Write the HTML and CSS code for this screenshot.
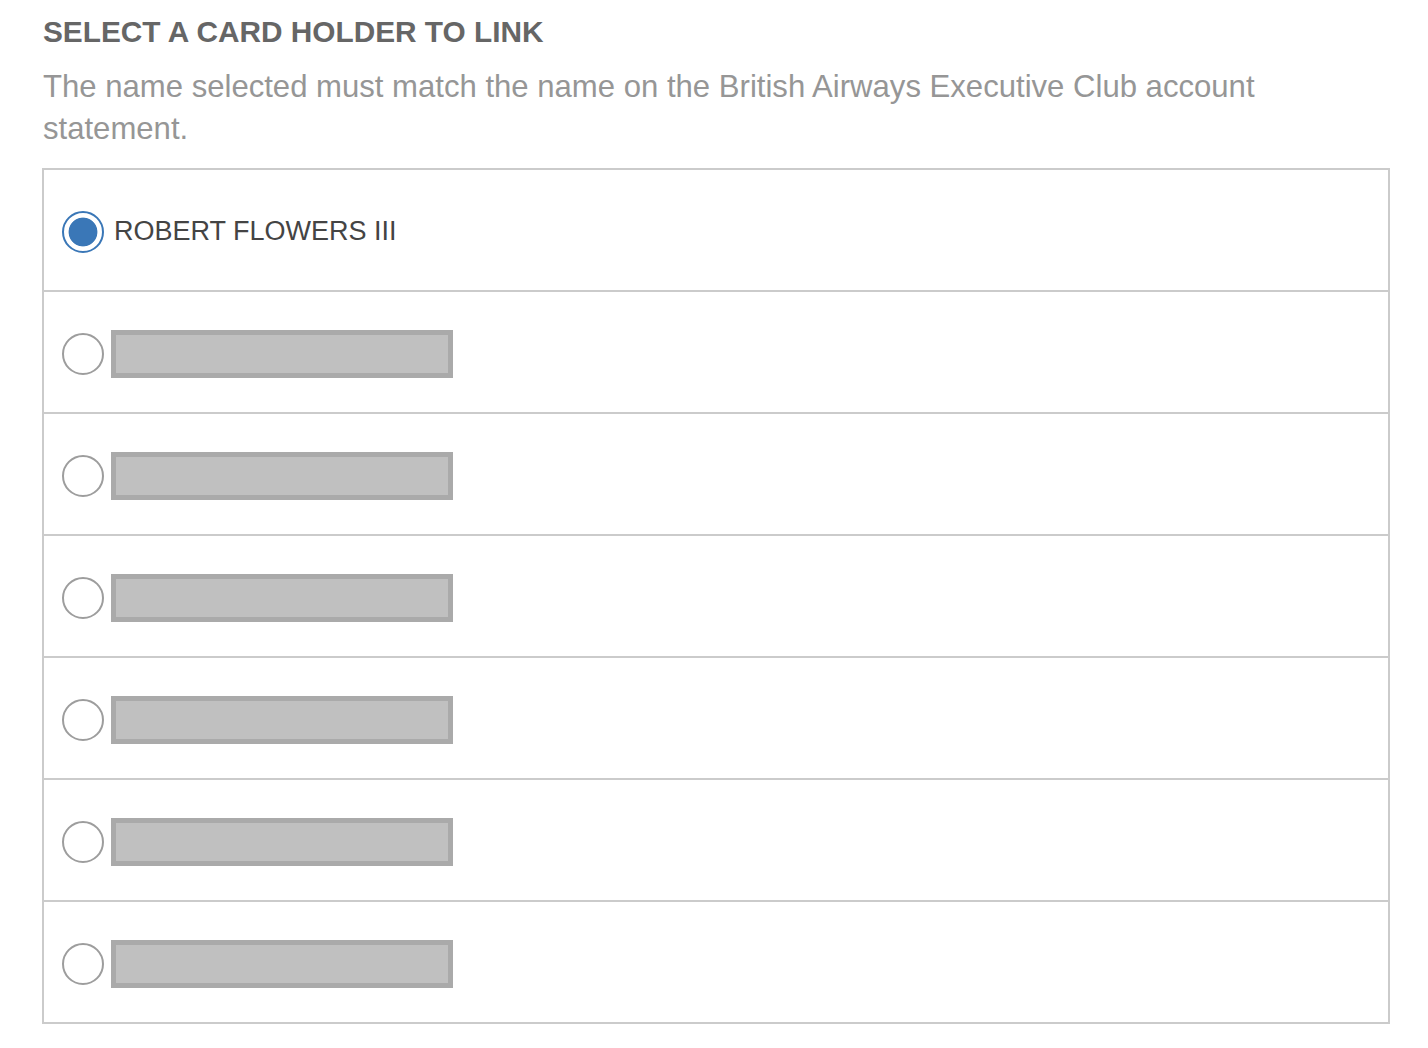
FILE: index.html
```html
<!DOCTYPE html>
<html lang="en">
<head>
  <meta charset="UTF-8">
  <meta name="viewport" content="width=device-width, initial-scale=1.0">
  <title>Link Card Holder</title>
  <link rel="stylesheet" href="styles.css">
</head>
<body>
<div class="container">
  <h2 class="title">SELECT A CARD HOLDER TO LINK</h2>
  <p class="subtitle">The name selected must match the name on the British Airways Executive Club account statement.</p>
  <form class="holders">
    <label class="holder">
      <input type="radio" name="holder" checked>
      <span class="holder-name">ROBERT FLOWERS III</span>
    </label>
    <label class="holder">
      <input type="radio" name="holder">
      <span class="redacted"></span>
    </label>
    <label class="holder">
      <input type="radio" name="holder">
      <span class="redacted"></span>
    </label>
    <label class="holder">
      <input type="radio" name="holder">
      <span class="redacted"></span>
    </label>
    <label class="holder">
      <input type="radio" name="holder">
      <span class="redacted"></span>
    </label>
    <label class="holder">
      <input type="radio" name="holder">
      <span class="redacted"></span>
    </label>
    <label class="holder">
      <input type="radio" name="holder">
      <span class="redacted"></span>
    </label>
  </form>
</div>
</body>
</html>
```
FILE: styles.css
```css
html, body {
  margin: 0;
  background: #fff;
}
body {
  font-family: "Liberation Sans", Arial, Helvetica, sans-serif;
}
.container {
  padding: 15px 38px 24px 42px;
}
.title {
  margin: 0 0 0 1px;
  font-size: 29.8px;
  line-height: 34px;
  font-weight: bold;
  color: #666;
}
.subtitle {
  margin: 17px 0 0 1px;
  max-width: 1300px;
  font-size: 31.1px;
  line-height: 42px;
  color: #969696;
}
.holders {
  margin-top: 18px;
  border: 2px solid #cbcbcb;
  display: flex;
  flex-direction: column;
}
.holder {
  height: 122px;
  box-sizing: border-box;
  padding: 3px 18px 0 18px;
  display: flex;
  align-items: center;
  gap: 7px;
  border-bottom: 2px solid #cbcbcb;
  cursor: pointer;
}
.holder:last-child {
  height: 120px;
  border-bottom: none;
}
.holder input {
  appearance: none;
  -webkit-appearance: none;
  margin: 0;
  width: 42px;
  height: 42px;
  flex: none;
  box-sizing: border-box;
  border: 2px solid #9d9d9d;
  border-radius: 50%;
  background: #fff;
  cursor: pointer;
}
.holder input:checked {
  border-color: #3a77b7;
  background: radial-gradient(circle, #3a77b7 0 14px, #fff 14.8px);
}
.holder-name {
  padding-left: 3px;
  font-size: 27px;
  color: #444;
}
.redacted {
  width: 342px;
  height: 48px;
  box-sizing: border-box;
  border: 5px solid #aaa;
  background: #c0c0c0;
}
```
